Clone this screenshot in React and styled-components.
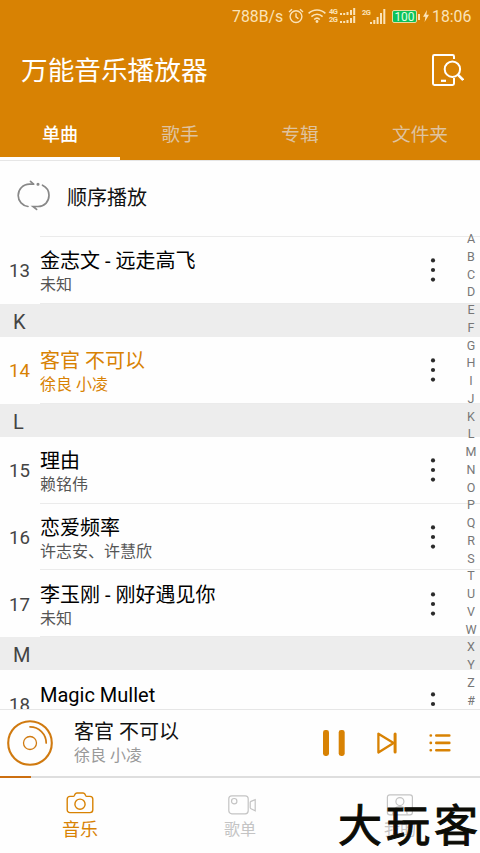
import React from "react";
import styled, { createGlobalStyle } from "styled-components";

const tabs = ["单曲", "歌手", "专辑", "文件夹"];

const songs = [
  { no: 13, title: "金志文 - 远走高飞", artist: "未知" },
  { letter: "K" },
  { no: 14, title: "客官 不可以", artist: "徐良 小凌", active: true },
  { letter: "L" },
  { no: 15, title: "理由", artist: "赖铭伟" },
  { no: 16, title: "恋爱频率", artist: "许志安、许慧欣" },
  { no: 17, title: "李玉刚 - 刚好遇见你", artist: "未知" },
  { letter: "M" },
  { no: 18, title: "Magic Mullet" },
];

const letters = "ABCDEFGHIJKLMNOPQRSTUVWXYZ#".split("");

const AlarmIcon = () => (
  <svg width='16' height='16' viewBox='0 0 16 16' fill='none' stroke='currentColor' strokeWidth='1.4'>
    <circle cx='8' cy='8.6' r='5.9' />
    <path d='M8 5.2v3.6l2.4 2M1 4l3-2.8M15 4l-3-2.8' />
  </svg>
);

const WifiIcon = () => (
  <svg width='18' height='14' viewBox='0 0 18 14' fill='none' stroke='currentColor' strokeWidth='1.6'>
    <path d='M.6 4.4c4.8-4.600 12-4.600 16.800 0M3.400 7.600c3.300-3.100 7.900-3.100 11.200 0M6.200 10.500c1.600-1.500 4-1.500 5.600 0' />
    <circle cx='9' cy='12.500' r='1.400' fill='currentColor' stroke='none' />
  </svg>
);

const SmallBars = () => (
  <svg width='17' height='7' viewBox='0 0 17 7' fill='currentColor'>
    <path d='M1 5h2v2H1zM4.2 5h2v2h-2zM7.5 4h2v3h-2zM11 2h2v5h-2zM14.2 0h2v7h-2z' />
  </svg>
);

const BigBars = () => (
  <svg width='16' height='15' viewBox='0 0 16 15' fill='currentColor'>
    <path d='M0 13h2v2H0zM3.3 11h2v4h-2zM6.6 8h2v7h-2zM10 4h2v11h-2zM13.3 0h2v15h-2z' />
  </svg>
);

const BoltIcon = () => (
  <svg width='6' height='12' viewBox='0 0 6 12' fill='currentColor'>
    <path d='M4 0L0 6.8h2.4L1.6 12L6 4.8H3.4z' />
  </svg>
);

const ScanIcon = () => (
  <svg width='34' height='34' viewBox='0 0 34 34' fill='none' stroke='#fff' strokeWidth='2'>
    <path d='M24 6V3.4Q24 2 22.6 2H4.4Q3 2 3 3.4v27.2Q3 32 4.4 32h18.2q1.4 0 1.4-1.4V25' />
    <path d='M11 27.8h5' strokeWidth='2.2' />
    <circle cx='22.400' cy='16.200' r='7.700' />
    <path d='M27.800 21.600l5.400 5.400' strokeWidth='2.600' />
  </svg>
);

const LoopIcon = () => (
  <svg width='34' height='32' viewBox='0 0 34 32' fill='none' stroke='#888' strokeWidth='1.7' strokeLinecap='round'>
    <path d='M16.5 4.2H12.500C6 4.2 1.2 9.3 1.2 15.5c0 5.6 4.3 10.300 9.800 11' />
    <path d='M16.5 4.2L13.500 1.4' />
    <path d='M25.500 5.200c3.800 1.800 6.500 5.600 6.500 10.100 0 6.500-4.600 11.200-11 11.200h-5l3.600 2.900' />
    <circle cx='21' cy='4.3' r='.7' fill='#888' />
  </svg>
);

const MoreIcon = () => (
  <svg width='6' height='26' viewBox='0 0 6 26' fill='#2b2b2b'>
    <circle cx='3' cy='3.4' r='2.1' />
    <circle cx='3' cy='13' r='2.1' />
    <circle cx='3' cy='22.6' r='2.1' />
  </svg>
);

const DiscIcon = () => (
  <svg width='46' height='46' viewBox='0 0 46 46' fill='none' stroke='#d07a10'>
    <circle cx='23' cy='23' r='21.8' strokeWidth='2.1' />
    <circle cx='23' cy='23' r='6.5' strokeWidth='1.3' />
    <path d='M23 6.8A16.2 16.2 0 0 1 39.2 23' strokeWidth='1.7' strokeLinecap='round' />
  </svg>
);

const PauseIcon = () => (
  <svg width='22' height='26' viewBox='0 0 22 26' fill='#d88203'>
    <rect x='0' y='0' width='6' height='26' rx='2.4' />
    <rect x='15.7' y='0' width='6' height='26' rx='2.4' />
  </svg>
);

const NextIcon = () => (
  <svg width='20' height='22' viewBox='0 0 20 22' fill='none' stroke='#d88203' strokeLinejoin='round' strokeLinecap='round'>
    <path d='M1.4 1.7v18.8L16.6 11z' strokeWidth='2.3' />
    <path d='M18.1 1.9v18.2' strokeWidth='3' />
  </svg>
);

const ListIcon = () => (
  <svg width='22' height='20' viewBox='0 0 22 20' fill='none' stroke='#d88203' strokeWidth='2.6' strokeLinecap='round'>
    <path d='M7.3 2.5h13M7.3 9.9h13M7.3 17.3h13' />
    <path d='M1.7 2.5h.2M1.7 9.9h.2M1.7 17.3h.2' />
  </svg>
);

const CameraIcon = () => (
  <svg width='28' height='22' viewBox='0 0 28 22' fill='none' stroke='currentColor' strokeWidth='1.4'>
    <path d='M4 4.4h3.2c.9 0 1-.5 1.3-1.2C9 1.6 9.4 1 10.8 1h6.4c1.4 0 1.8.6 2.3 2.2.3.7.4 1.2 1.3 1.2H24c1.7 0 2.8 1.1 2.8 2.8v10.6c0 1.7-1.1 2.8-2.8 2.8H4c-1.7 0-2.8-1.1-2.8-2.8V7.2C1.2 5.5 2.3 4.4 4 4.4z' />
    <circle cx='14' cy='12.2' r='5.1' />
  </svg>
);

const VideoIcon = () => (
  <svg width='28' height='22' viewBox='0 0 28 22' fill='none' stroke='currentColor' strokeWidth='1.2'>
    <rect x='.8' y='1.8' width='19.4' height='18' rx='3' />
    <circle cx='6.2' cy='7.2' r='2.7' />
    <path d='M27.2 5.6v11.2l-4.2-2q-.8-.4-.8-1.2V8.6q0-.8.8-1.2z' />
  </svg>
);

const PersonIcon = () => (
  <svg width='28' height='22' viewBox='0 0 28 22' fill='none' stroke='currentColor' strokeWidth='1.2'>
    <rect x='1.4' y='.8' width='25' height='20' rx='2.4' />
    <circle cx='13.9' cy='7.6' r='4' />
    <path d='M6.6 20.6c0-5 3-7.9 7.3-7.9s7.3 2.9 7.3 7.9' />
  </svg>
);

const App = () => {
  return (
    <Page>
      <GlobalStyle />
      <Header>
        <StatusBar>
          <Speed>788B/s</Speed>
          <AlarmIcon />
          <WifiIcon />
          <DualSim>
            <div>
              <Net>4G</Net>
              <SmallBars />
            </div>
            <div>
              <Net>2G</Net>
              <SmallBars />
            </div>
          </DualSim>
          <Sim>
            <Net>2G</Net>
            <BigBars />
          </Sim>
          <Battery>100</Battery>
          <BoltIcon />
          <Clock>18:06</Clock>
        </StatusBar>
        <TitleBar>
          <h1>万能音乐播放器</h1>
          <ScanIcon />
        </TitleBar>
        <Tabs>
          {tabs.map((tab, i) => (
            <Tab key={tab} $active={i === 0}>
              {tab}
            </Tab>
          ))}
        </Tabs>
      </Header>
      <PlayMode>
        <LoopIcon />
        <span>顺序播放</span>
      </PlayMode>
      <ListArea>
        <SongList>
          {songs.map((item) =>
            item.letter ? (
              <Section key={item.letter}>{item.letter}</Section>
            ) : (
              <Song key={item.no} $active={item.active}>
                <div className='no'>{item.no}</div>
                <div className='info'>
                  <div className='text'>
                    <div className='title'>{item.title}</div>
                    <div className='artist'>{item.artist}</div>
                  </div>
                  <MoreIcon />
                </div>
              </Song>
            )
          )}
        </SongList>
        <LetterIndex>
          {letters.map((letter) => (
            <span key={letter}>{letter}</span>
          ))}
        </LetterIndex>
      </ListArea>
      <Player>
        <DiscIcon />
        <div className='playing'>
          <div className='title'>客官 不可以</div>
          <div className='artist'>徐良 小凌</div>
        </div>
        <Controls>
          <PauseIcon />
          <NextIcon />
          <ListIcon />
        </Controls>
      </Player>
      <Progress>
        <div />
      </Progress>
      <BottomNav>
        <NavItem $active>
          <CameraIcon />
          音乐
        </NavItem>
        <NavItem $shift={4}>
          <VideoIcon />
          歌单
        </NavItem>
        <NavItem>
          <PersonIcon />
          我的
        </NavItem>
        <Watermark>大玩客</Watermark>
      </BottomNav>
    </Page>
  );
};

const GlobalStyle = createGlobalStyle`
  * {
    box-sizing: border-box;
  }

  body {
    margin: 0;
    background: #fff;
    font-family: Roboto, "Noto Sans CJK SC", sans-serif;
  }

  svg {
    display: block;
    flex-shrink: 0;
  }
`;

const Page = styled.div`
  display: flex;
  flex-direction: column;
  width: 480px;
  height: 853px;
  overflow: hidden;
  background: #fefefe;
`;

const Header = styled.header`
  display: flex;
  flex-direction: column;
  flex-shrink: 0;
  height: 160px;
  background: #d88203;
`;

const StatusBar = styled.div`
  display: flex;
  align-items: center;
  height: 32px;
  padding-left: 232px;
  color: #fbe3b8;
  white-space: nowrap;

  svg {
    margin-right: 4px;
  }
`;

const Speed = styled.span`
  width: 51px;
  margin-right: 5px;
  font-size: 15.8px;
`;

const Clock = styled.span`
  margin-left: -1px;
  font-size: 15.8px;
`;

const Net = styled.span`
  width: 11px;
  font-size: 7.5px;
  font-weight: 700;
  line-height: 7px;
  letter-spacing: -0.5px;
`;

const DualSim = styled.div`
  width: 28px;
  margin: 0 5px 0 -1px;

  div {
    display: flex;
    height: 8px;
  }

  svg {
    margin: 0 0 0 -1px;
  }
`;

const Sim = styled.div`
  display: flex;
  height: 15px;
  margin-right: 6px;

  ${Net} {
    width: 8px;
  }

  svg {
    margin: 0;
  }
`;

const Battery = styled.div`
  position: relative;
  width: 25px;
  height: 13px;
  margin-right: 6px;
  border: 1px solid #e9dca0;
  border-radius: 2px;
  background: #0cc25a;
  color: #e2ffe0;
  font-size: 12px;
  line-height: 12px;
  text-align: center;

  &::after {
    content: "";
    position: absolute;
    top: 3px;
    right: -4px;
    width: 2px;
    height: 6px;
    background: #fbe3b8;
  }
`;

const TitleBar = styled.div`
  display: flex;
  align-items: center;
  justify-content: space-between;
  height: 76px;
  padding: 0 16px 0 21px;

  h1 {
    margin: 2px 0 0;
    color: #fff;
    font-size: 26.67px;
    font-weight: 400;
    line-height: 40px;
  }
`;

const Tabs = styled.div`
  display: flex;
  height: 52px;
`;

const Tab = styled.div`
  flex: 1;
  border-bottom: 3px solid ${({ $active }) => ($active ? "#fff" : "transparent")};
  color: ${({ $active }) => ($active ? "#fff" : "#dfc3a0")};
  font-size: ${({ $active }) => ($active ? 18 : 18.67)}px;
  font-weight: ${({ $active }) => ($active ? 500 : 400)};
  line-height: 54px;
  text-align: center;
`;

const PlayMode = styled.div`
  display: flex;
  align-items: center;
  flex-shrink: 0;
  height: 76px;
  padding: 0 0 5px 17px;
  border-top: 1px solid #e6e6e6;
  color: #111;
  font-size: 20px;

  span {
    margin-left: 16px;
  }
`;

const ListArea = styled.div`
  position: relative;
  flex-shrink: 0;
  height: 474px;
  border-bottom: 1px solid #e6e6e6;
`;

const SongList = styled.div`
  display: flex;
  flex-direction: column;
  height: 473px;
  overflow: hidden;
  padding-top: 1px;
  background: linear-gradient(#ebebeb, #ebebeb) 40px 0 / 100% 1px no-repeat;
`;

const Section = styled.div`
  flex-shrink: 0;
  height: 33.33px;
  padding-left: 13px;
  background: #ededed;
  color: #444;
  font-size: 20px;
  line-height: 36px;
`;

const Song = styled.div`
  display: flex;
  flex-shrink: 0;
  align-items: center;
  height: 66.67px;
  color: ${({ $active }) => ($active ? "#d88203" : "#000")};

  .no {
    width: 40px;
    padding: 2px 0 0 9px;
    color: ${({ $active }) => ($active ? "#d88203" : "#444")};
    font-size: 18.67px;
  }

  .info {
    display: flex;
    flex: 1;
    align-self: stretch;
    align-items: center;
    justify-content: space-between;
    padding: 1px 44px 0 0;
    border-bottom: 1px solid #ebebeb;
  }

  .text {
    padding-top: 4px;
  }

  .title {
    font-size: 20px;
    line-height: 26px;
  }

  .artist {
    height: 22px;
    color: ${({ $active }) => ($active ? "#d88203" : "#555")};
    font-size: 16px;
    line-height: 22px;
  }
`;

const LetterIndex = styled.div`
  position: absolute;
  top: -6px;
  right: 0;
  display: flex;
  flex-direction: column;
  width: 18px;
  color: #777;
  font-size: 12.5px;
  line-height: 17.75px;
  text-align: center;
`;

const Player = styled.div`
  display: flex;
  align-items: center;
  flex-shrink: 0;
  height: 66px;
  padding-left: 7px;

  .playing {
    flex: 1;
    margin-left: 21px;
  }

  .title {
    color: #111;
    font-size: 20px;
    line-height: 26px;
  }

  .artist {
    color: #999;
    font-size: 16px;
    line-height: 22px;
  }
`;

const Controls = styled.div`
  display: flex;
  align-items: center;
  gap: 32px;
  padding: 0 29px 0 0;
`;

const Progress = styled.div`
  flex-shrink: 0;
  height: 2px;
  background: #dedede;

  div {
    width: 31px;
    height: 2px;
    background: #cc6f10;
  }
`;

const BottomNav = styled.nav`
  position: relative;
  display: flex;
  flex: 1;
`;

const NavItem = styled.div`
  display: flex;
  flex: 1;
  flex-direction: column;
  align-items: center;
  padding-top: ${({ $active }) => ($active ? 14 : 16)}px;
  color: ${({ $active }) => ($active ? "#d88203" : "#c4c4c4")};
  font-size: ${({ $active }) => ($active ? 18 : 16)}px;
  line-height: ${({ $active }) => ($active ? 31 : 27)}px;

  svg {
    margin-left: ${({ $shift }) => $shift || 0}px;
  }
`;

const Watermark = styled.div`
  position: absolute;
  top: 24px;
  right: -2px;
  color: #0c0c06;
  font-size: 44px;
  font-weight: 400;
  letter-spacing: 4px;
  line-height: 50px;
  white-space: nowrap;
  -webkit-text-stroke: 1px #0c0c06;
`;

export default App;
